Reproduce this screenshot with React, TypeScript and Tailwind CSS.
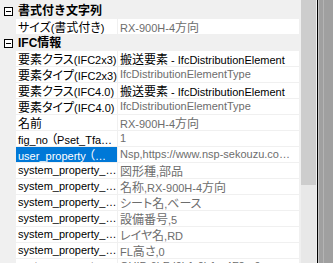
import React from 'react';

type Row =
  | { kind: 'cat'; label: string }
  | { kind: 'prop'; name: string; value: string; dark?: boolean; selected?: boolean };

const rows: Row[] = [
  { kind: 'cat', label: '書式付き文字列' },
  { kind: 'prop', name: 'サイズ(書式付き)', value: 'RX-900H-4方向' },
  { kind: 'cat', label: 'IFC情報' },
  { kind: 'prop', name: '要素クラス(IFC2x3)', value: '搬送要素 - IfcDistributionElement', dark: true },
  { kind: 'prop', name: '要素タイプ(IFC2x3)', value: 'IfcDistributionElementType' },
  { kind: 'prop', name: '要素クラス(IFC4.0)', value: '搬送要素 - IfcDistributionElement', dark: true },
  { kind: 'prop', name: '要素タイプ(IFC4.0)', value: 'IfcDistributionElementType' },
  { kind: 'prop', name: '名前', value: 'RX-900H-4方向' },
  { kind: 'prop', name: 'fig_no （Pset_Tfa…', value: '1' },
  { kind: 'prop', name: 'user_property （…', value: 'Nsp,https://www.nsp-sekouzu.co…', selected: true },
  { kind: 'prop', name: 'system_property_…', value: '図形種,部品' },
  { kind: 'prop', name: 'system_property_…', value: '名称,RX-900H-4方向' },
  { kind: 'prop', name: 'system_property_…', value: 'シート名,ベース' },
  { kind: 'prop', name: 'system_property_…', value: '設備番号,5' },
  { kind: 'prop', name: 'system_property_…', value: 'レイヤ名,RD' },
  { kind: 'prop', name: 'system_property_…', value: 'FL高さ,0' },
  { kind: 'prop', name: 'system_property_…', value: 'GUID,6bFd9b1-0b1e-4F2a-9c' },
];

// japanese runs get the wider size, latin runs stay narrow
function Txt({ s }: { s: string }) {
  const parts = s.split(/([\u3000-\u30ff\u4e00-\u9fff\uff00-\uffef]+)/).filter(Boolean);
  return (
    <>
      {parts.map((p, i) =>
        /[\u3000-\u30ff\u4e00-\u9fff\uff00-\uffef]/.test(p) ? (
          <span key={i} className="text-[12px] font-['Noto_Sans_CJK_JP',sans-serif] [font-feature-settings:'palt']">
            {p}
          </span>
        ) : (
          <span key={i}>{p}</span>
        )
      )}
    </>
  );
}

function Collapse() {
  return (
    <div className="w-[9px] h-[9px] border border-black bg-white flex items-center justify-center">
      <div className="w-[5px] h-[1px] bg-black" />
    </div>
  );
}

export default function App() {
  return (
    <div className="w-[333px] h-[263px] overflow-hidden flex bg-[#f0f0f0] text-[11px] text-black font-['Liberation_Sans','Noto_Sans_CJK_JP',sans-serif]">
      {/* property grid */}
      <div className="w-[299px] pt-[3px] flex flex-col shrink-0">
        {rows.map((r, i) =>
          r.kind === 'cat' ? (
            <div key={i} className="h-[16px] shrink-0 flex items-center">
              <div className="w-[16px] flex justify-center pl-[1px]">
                <Collapse />
              </div>
              <span className="pl-[2px] font-bold text-[12px] leading-[16px]">{r.label}</span>
            </div>
          ) : (
            <div key={i} className="h-[16px] shrink-0 flex">
              <div className="w-[16px] shrink-0" />
              <div
                className={
                  r.selected
                    ? 'w-[101px] shrink-0 bg-[#0078d7] text-white pl-[2px] leading-[15px] whitespace-nowrap overflow-hidden border-b border-[#f0f0f0]'
                    : 'w-[101px] shrink-0 bg-white pl-[2px] leading-[15px] whitespace-nowrap overflow-hidden border-b border-[#f0f0f0]'
                }
              >
                <Txt s={r.name} />
              </div>
              <div className="w-[1px] shrink-0 bg-[#f0f0f0]" />
              <div
                className={
                  r.dark
                    ? 'flex-1 bg-white pl-[2px] leading-[15px] whitespace-nowrap overflow-hidden border-b border-[#f0f0f0]'
                    : 'flex-1 bg-white pl-[2px] leading-[15px] whitespace-nowrap overflow-hidden border-b border-[#f0f0f0] text-[#6d6d6d]'
                }
              >
                <Txt s={r.value} />
              </div>
            </div>
          )
        )}
      </div>
      {/* scrollbar */}
      <div className="w-[2px] shrink-0" />
      <div className="w-[15px] shrink-0 flex flex-col bg-[#e8e8e8]">
        <div className="h-[185px] bg-[#cdcdcd]" />
      </div>
      <div className="w-[1px] shrink-0 bg-[#f0f0f0]" />
      <div className="w-[1px] shrink-0 bg-black" />
      <div className="w-[1px] shrink-0 bg-[#c8c8c8]" />
      <div className="flex-1 flex bg-[#a0a0a0]">
        <div className="w-[4px]" />
        <div className="w-[1px] bg-[#b4b4b4]" />
      </div>
    </div>
  );
}
